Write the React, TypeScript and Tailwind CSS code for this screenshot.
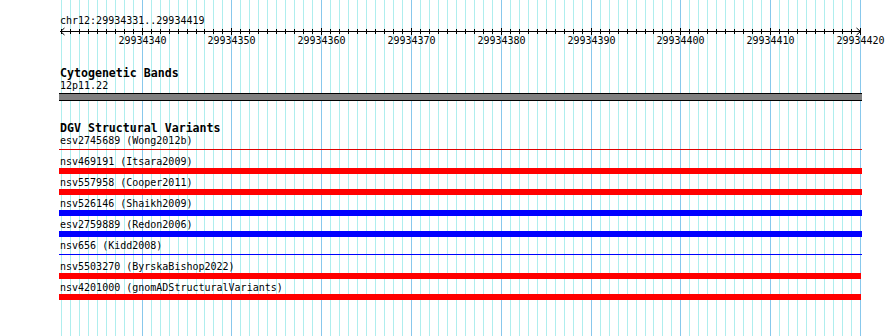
import React from 'react';

const START = 29934331;
const COUNT = 90;

// pixel column of each base's grid line
const colOf = (i: number) => Math.round(60.8 + i * 8.98);

const features = [
  { label: 'esv2745689 (Wong2012b)', color: 'red', thin: true, wide: true },
  { label: 'nsv469191 (Itsara2009)', color: 'red', thin: false, wide: true },
  { label: 'nsv557958 (Cooper2011)', color: 'red', thin: false, wide: true },
  { label: 'nsv526146 (Shaikh2009)', color: 'blue', thin: false, wide: true },
  { label: 'esv2759889 (Redon2006)', color: 'blue', thin: false, wide: true },
  { label: 'nsv656 (Kidd2008)', color: 'blue', thin: true, wide: true },
  { label: 'nsv5503270 (ByrskaBishop2022)', color: 'red', thin: false, wide: false },
  { label: 'nsv4201000 (gnomADStructuralVariants)', color: 'red', thin: false, wide: false },
];

function Grid() {
  return (
    <svg className="absolute inset-0 pointer-events-none" width={890} height={336}>
      {Array.from({ length: COUNT }, (_, i) => {
        const major = (START + i) % 10 === 0;
        const x = colOf(i) + 0.5;
        return (
          <line
            key={i}
            x1={x}
            x2={x}
            y1={0}
            y2={336}
            stroke={major ? '#88c8ec' : '#afeeee'}
            strokeWidth={1}
          />
        );
      })}
    </svg>
  );
}

function Ruler() {
  // svg top sits at page y=27
  const lineY = 4.5;
  return (
    <svg className="-ml-[60px] block" width={890} height={39}>
      <line x1={60} x2={861} y1={lineY} y2={lineY} stroke="black" strokeWidth={1} />
      <polyline points={`64.5,1 60.5,${lineY} 64.5,8`} fill="none" stroke="black" strokeWidth={1} />
      <polyline points={`856.5,1 860.5,${lineY} 856.5,8`} fill="none" stroke="black" strokeWidth={1} />
      {Array.from({ length: COUNT }, (_, i) => {
        const major = (START + i) % 10 === 0;
        const x = colOf(i) + 0.5;
        return (
          <line
            key={i}
            x1={x}
            x2={x}
            y1={major ? 1 : 2}
            y2={major ? 8 : 7}
            stroke="black"
            strokeWidth={1}
          />
        );
      })}
      {Array.from({ length: COUNT }, (_, i) => i)
        .filter((i) => (START + i) % 10 === 0)
        .map((i) => (
          <text
            key={i}
            x={colOf(i) + 0.5}
            y={17}
            textAnchor="middle"
            fontFamily="'DejaVu Sans Mono', monospace"
            fontSize={10}
            fill="black"
          >
            {START + i}
          </text>
        ))}
    </svg>
  );
}

function FeatureRow({ label, color, thin, wide }: (typeof features)[number]) {
  const bg = color === 'red' ? 'bg-[#ff0000]' : 'bg-[#0000ff]';
  const thinBg = color === 'red' ? 'bg-[#e00000]' : 'bg-[#0000ff]';
  return (
    <div className="pb-[3px]">
      <div className="text-[10px] leading-[12px] h-[12px] whitespace-pre">{label}</div>
      <div className={`-ml-px h-[6px] ${thin ? 'pt-[2px]' : ''} ${wide ? 'w-[803px]' : 'w-[802px]'}`}>
        <div className={thin ? `h-px w-full ${thinBg}` : `h-full w-full ${bg}`} />
      </div>
    </div>
  );
}

export default function App() {
  return (
    <div className="relative w-[890px] h-[336px] overflow-hidden bg-white text-black font-['DejaVu_Sans_Mono',monospace]">
      <Grid />
      <div className="relative pl-[60px] pt-[15px]">
        <div className="text-[10px] leading-[12px] h-[12px]">chr12:29934331..29934419</div>
        <Ruler />
        <h2 className="text-[11.6px] leading-[14px] font-bold">Cytogenetic Bands</h2>
        <div className="text-[10px] leading-[12px] h-[12px]">12p11.22</div>
        <div className="mt-px -ml-px h-[8px] w-[803px] border-y border-black bg-[#808080]" />
        <h2 className="mt-[20px] text-[11.6px] leading-[14px] font-bold">DGV Structural Variants</h2>
        {features.map((f) => (
          <FeatureRow key={f.label} {...f} />
        ))}
      </div>
    </div>
  );
}
